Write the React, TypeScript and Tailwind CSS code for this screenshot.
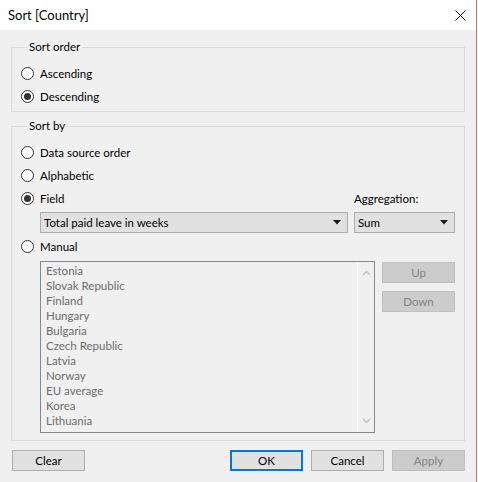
import React from "react";

const countries = [
  "Estonia",
  "Slovak Republic",
  "Finland",
  "Hungary",
  "Bulgaria",
  "Czech Republic",
  "Latvia",
  "Norway",
  "EU average",
  "Korea",
  "Lithuania",
];

function Radio({ label, checked }: { label: string; checked?: boolean }) {
  return (
    <label className="flex h-[23px] items-center gap-[6px]">
      <span className="flex h-[13px] w-[13px] items-center justify-center rounded-full border border-[#333333] bg-white">
        {checked && <span className="h-[7px] w-[7px] rounded-full bg-[#333333]" />}
      </span>
      <span>{label}</span>
    </label>
  );
}

function Combo({ value, className }: { value: string; className: string }) {
  return (
    <div
      className={`flex h-[21px] items-center justify-between border border-[#adadad] bg-[#e1e1e1] pl-[3px] pr-[6px] ${className}`}
    >
      <span>{value}</span>
      <svg width="8" height="5" viewBox="0 0 8 5">
        <path d="M0 0h8L4 4.5z" fill="#1a1a1a" />
      </svg>
    </div>
  );
}

function Button({
  children,
  variant = "normal",
}: {
  children: React.ReactNode;
  variant?: "normal" | "default" | "disabled";
}) {
  const cls =
    variant === "default"
      ? "border-2 border-[#0078d7] bg-[#e1e1e1] text-black"
      : variant === "disabled"
        ? "border border-[#bfbfbf] bg-[#cccccc] text-[#838383]"
        : "border border-[#adadad] bg-[#e1e1e1] text-black";
  return (
    <button className={`flex h-[21px] w-[73px] items-center justify-center ${cls}`}>
      {children}
    </button>
  );
}

export default function App() {
  return (
    <div
      className="flex h-[482px] w-[478px] bg-white text-[11.5px] leading-[15px] text-black"
      style={{ fontFamily: 'Lato, "Noto Sans", sans-serif' }}
    >
      <div className="flex w-[476px] flex-col bg-[#f0f0f0]">
        {/* Title bar */}
        <div className="flex h-[30px] items-center justify-between bg-white pl-[8px] pr-[10px]">
          <span className="text-[13px]">Sort [Country]</span>
          <svg width="11" height="11" viewBox="0 0 11 11">
            <path d="M0.5 0.5l10 10M10.5 0.5l-10 10" stroke="#000" strokeWidth="1" />
          </svg>
        </div>

        <div className="flex flex-col px-[11px]">
          {/* Sort order */}
          <fieldset className="mt-[9px] border border-[#dcdcdc] pb-[3px] pl-[9px] pt-[7px]">
            <legend className="ml-[6px] px-[2px] leading-[16px]">Sort order</legend>
            <Radio label="Ascending" />
            <Radio label="Descending" checked />
          </fieldset>

          {/* Sort by */}
          <fieldset className="mt-[6px] border border-[#dcdcdc] pb-[7px] pl-[9px] pr-[9px] pt-[7px]">
            <legend className="ml-[6px] px-[2px] leading-[16px]">Sort by</legend>
            <Radio label="Data source order" />
            <Radio label="Alphabetic" />
            <div className="flex items-center justify-between">
              <Radio label="Field" checked />
              <span className="w-[101px]">Aggregation:</span>
            </div>
            <div className="mt-[2px] flex gap-[6px] pl-[19px]">
              <Combo value="Total paid leave in weeks" className="w-[308px]" />
              <Combo value="Sum" className="w-[101px]" />
            </div>
            <div className="mt-[2px]">
              <Radio label="Manual" />
            </div>
            <div className="mt-[3px] flex gap-[7px] pl-[19px]">
              <div className="flex h-[172px] w-[335px] border border-[#828790] bg-[#f0f0f0]">
                <ul className="flex-1 pl-[5px] pt-[1px] text-[#6d6d6d]">
                  {countries.map((c) => (
                    <li key={c} className="h-[15px]">
                      {c}
                    </li>
                  ))}
                </ul>
                <div className="flex w-[17px] flex-col items-center justify-between border-l border-white py-[8px]">
                  <svg width="9" height="6" viewBox="0 0 9 6">
                    <path d="M1 5l3.5-3.5L8 5" stroke="#c2c2c2" strokeWidth="1.5" fill="none" />
                  </svg>
                  <svg width="9" height="6" viewBox="0 0 9 6">
                    <path d="M1 1l3.5 3.5L8 1" stroke="#c2c2c2" strokeWidth="1.5" fill="none" />
                  </svg>
                </div>
              </div>
              <div className="mt-[1px] flex flex-col gap-[8px]">
                <Button variant="disabled">Up</Button>
                <Button variant="disabled">Down</Button>
              </div>
            </div>
          </fieldset>

          {/* Footer */}
          <div className="mt-[9px] flex items-center pl-[1px]">
            <Button>Clear</Button>
            <div className="ml-auto flex gap-[8px]">
              <Button variant="default">OK</Button>
              <Button>Cancel</Button>
              <Button variant="disabled">Apply</Button>
            </div>
          </div>
        </div>
      </div>
      <div className="w-px bg-[#d9704a]" />
    </div>
  );
}
